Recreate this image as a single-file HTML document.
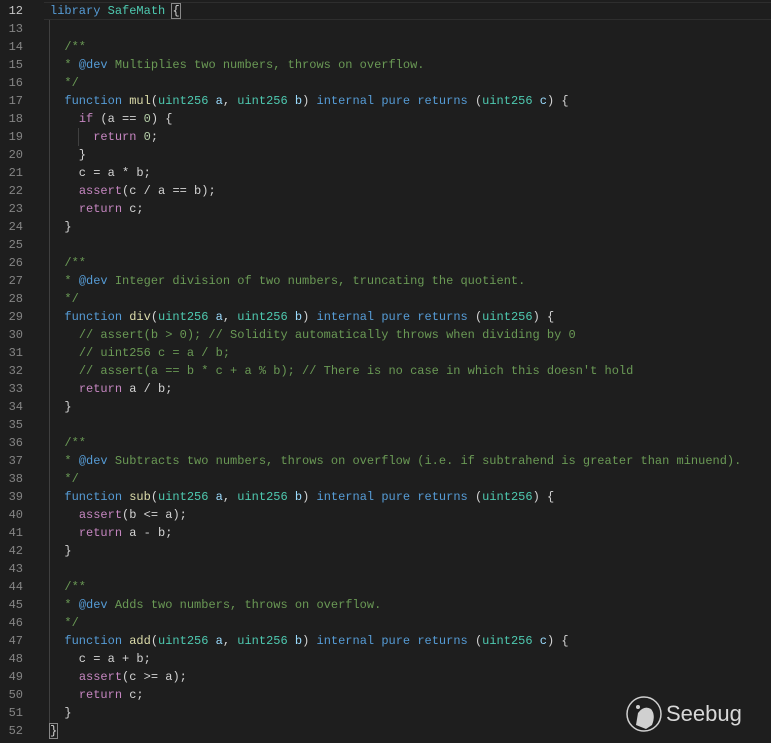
<!DOCTYPE html><html><head><style>
body{margin:0;background:#1e1e1e;width:771px;height:743px;overflow:hidden;font-family:"Liberation Mono",monospace;font-size:12px;}
.ln{position:absolute;left:0;width:23px;text-align:right;color:#858585;}
.cd{position:absolute;left:50px;color:#d4d4d4;white-space:pre;}
.k{color:#569cd6}.t{color:#4ec9b0}.f{color:#dcdcaa}.c{color:#6a9955}.p{color:#9cdcfe}.m{color:#c586c0}.n{color:#b5cea8}
.row{position:absolute;left:0;width:771px;height:18px;line-height:18px}
</style></head><body>
<div style="position:absolute;left:44px;top:2px;width:727px;height:18px;border-top:1px solid #2e2e2e;border-bottom:1px solid #2e2e2e;box-sizing:border-box"></div>
<div style="position:absolute;left:49px;top:20px;width:1px;height:712px;background:#404040"></div>
<div style="position:absolute;left:78px;top:128px;width:1px;height:18px;background:#404040"></div>
<div id="c"></div>
<script>
var L=[
'<span class="k">library</span> <span class="t">SafeMath</span> <span style="outline:1px solid #888">{</span>',
'',
'  <span class="c">/**</span>',
'  <span class="c">* <span class="k">@dev</span> Multiplies two numbers, throws on overflow.</span>',
'  <span class="c">*/</span>',
'  <span class="k">function</span> <span class="f">mul</span>(<span class="t">uint256</span> <span class="p">a</span>, <span class="t">uint256</span> <span class="p">b</span>) <span class="k">internal</span> <span class="k">pure</span> <span class="k">returns</span> (<span class="t">uint256</span> <span class="p">c</span>) {',
'    <span class="m">if</span> (a == <span class="n">0</span>) {',
'      <span class="m">return</span> <span class="n">0</span>;',
'    }',
'    c = a * b;',
'    <span class="m">assert</span>(c / a == b);',
'    <span class="m">return</span> c;',
'  }',
'',
'  <span class="c">/**</span>',
'  <span class="c">* <span class="k">@dev</span> Integer division of two numbers, truncating the quotient.</span>',
'  <span class="c">*/</span>',
'  <span class="k">function</span> <span class="f">div</span>(<span class="t">uint256</span> <span class="p">a</span>, <span class="t">uint256</span> <span class="p">b</span>) <span class="k">internal</span> <span class="k">pure</span> <span class="k">returns</span> (<span class="t">uint256</span>) {',
'    <span class="c">// assert(b &gt; 0); // Solidity automatically throws when dividing by 0</span>',
'    <span class="c">// uint256 c = a / b;</span>',
'    <span class="c">// assert(a == b * c + a % b); // There is no case in which this doesn\'t hold</span>',
'    <span class="m">return</span> a / b;',
'  }',
'',
'  <span class="c">/**</span>',
'  <span class="c">* <span class="k">@dev</span> Subtracts two numbers, throws on overflow (i.e. if subtrahend is greater than minuend).</span>',
'  <span class="c">*/</span>',
'  <span class="k">function</span> <span class="f">sub</span>(<span class="t">uint256</span> <span class="p">a</span>, <span class="t">uint256</span> <span class="p">b</span>) <span class="k">internal</span> <span class="k">pure</span> <span class="k">returns</span> (<span class="t">uint256</span>) {',
'    <span class="m">assert</span>(b &lt;= a);',
'    <span class="m">return</span> a - b;',
'  }',
'',
'  <span class="c">/**</span>',
'  <span class="c">* <span class="k">@dev</span> Adds two numbers, throws on overflow.</span>',
'  <span class="c">*/</span>',
'  <span class="k">function</span> <span class="f">add</span>(<span class="t">uint256</span> <span class="p">a</span>, <span class="t">uint256</span> <span class="p">b</span>) <span class="k">internal</span> <span class="k">pure</span> <span class="k">returns</span> (<span class="t">uint256</span> <span class="p">c</span>) {',
'    c = a + b;',
'    <span class="m">assert</span>(c &gt;= a);',
'    <span class="m">return</span> c;',
'  }',
'<span style="outline:1px solid #888">}</span>'];
var h='';for(var i=0;i<L.length;i++){h+='<div class="row" style="top:'+(2+18*i)+'px"><span class="ln"'+(i==0?' style="color:#c6c6c6"':'')+'>'+(12+i)+'</span><span class="cd">'+L[i]+'</span></div>';}
document.getElementById('c').innerHTML=h;
</script>
<svg style="position:absolute;left:624px;top:695px" width="40" height="40" viewBox="0 0 40 40"><circle cx="20" cy="19" r="17" fill="none" stroke="#d0d0d0" stroke-width="1.5"/><path d="M12 30 L14 18 Q20 10 27 14 Q32 20 28 30 L22 34 Z" fill="#d0d0d0"/><circle cx="14" cy="12" r="2" fill="#d0d0d0"/></svg>
<div style="position:absolute;left:666px;top:701px;color:#d8d8d8;font-family:'Liberation Sans',sans-serif;font-size:22px">Seebug</div>
</body></html>
